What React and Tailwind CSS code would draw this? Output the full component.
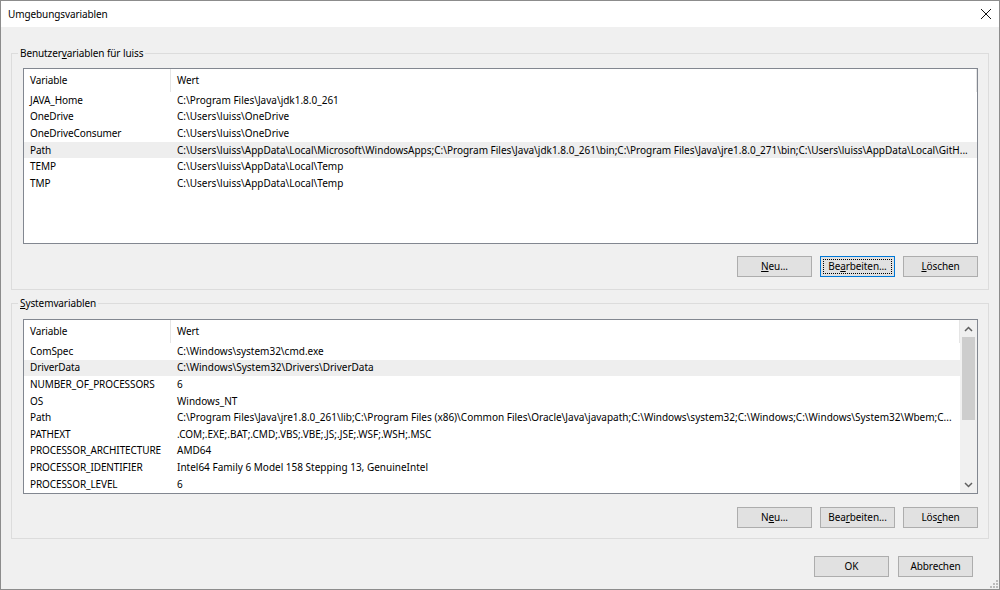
import React from "react";

const font = { fontFamily: '"Segoe UI", "Noto Sans", sans-serif' };

const userVars = [
  ["JAVA_Home", "C:\\Program Files\\Java\\jdk1.8.0_261"],
  ["OneDrive", "C:\\Users\\luiss\\OneDrive"],
  ["OneDriveConsumer", "C:\\Users\\luiss\\OneDrive"],
  [
    "Path",
    "C:\\Users\\luiss\\AppData\\Local\\Microsoft\\WindowsApps;C:\\Program Files\\Java\\jdk1.8.0_261\\bin;C:\\Program Files\\Java\\jre1.8.0_271\\bin;C:\\Users\\luiss\\AppData\\Local\\GitH...",
  ],
  ["TEMP", "C:\\Users\\luiss\\AppData\\Local\\Temp"],
  ["TMP", "C:\\Users\\luiss\\AppData\\Local\\Temp"],
];

const sysVars = [
  ["ComSpec", "C:\\Windows\\system32\\cmd.exe"],
  ["DriverData", "C:\\Windows\\System32\\Drivers\\DriverData"],
  ["NUMBER_OF_PROCESSORS", "6"],
  ["OS", "Windows_NT"],
  [
    "Path",
    "C:\\Program Files\\Java\\jre1.8.0_261\\lib;C:\\Program Files (x86)\\Common Files\\Oracle\\Java\\javapath;C:\\Windows\\system32;C:\\Windows;C:\\Windows\\System32\\Wbem;C...",
  ],
  ["PATHEXT", ".COM;.EXE;.BAT;.CMD;.VBS;.VBE;.JS;.JSE;.WSF;.WSH;.MSC"],
  ["PROCESSOR_ARCHITECTURE", "AMD64"],
  ["PROCESSOR_IDENTIFIER", "Intel64 Family 6 Model 158 Stepping 13, GenuineIntel"],
  ["PROCESSOR_LEVEL", "6"],
];

function Btn({ children, focused }) {
  return (
    <button
      className={
        "relative w-[75px] h-[21px] flex items-center justify-center text-black bg-[#e1e1e1] border " +
        (focused ? "border-[#0078d7]" : "border-[#adadad]")
      }
    >
      {focused && <span className="absolute inset-[2px] border border-dotted border-black" />}
      <span>{children}</span>
    </button>
  );
}

function Row({ name, value, selected }) {
  return (
    <div className={"flex h-[16.6px] items-center " + (selected ? "bg-[#eeeeee]" : "")}>
      <div className="w-[147px] shrink-0 pl-[6px] whitespace-nowrap overflow-hidden">{name}</div>
      <div className="flex-1 min-w-0 pl-[6px] pr-[4px] whitespace-nowrap overflow-hidden text-ellipsis tracking-normal">
        {value}
      </div>
    </div>
  );
}

function Header() {
  return (
    <div className="flex h-[23px] items-center">
      <div className="w-[147px] shrink-0 pl-[6px] h-full flex items-center border-r border-[#e5e5e5]">Variable</div>
      <div className="flex-1 pl-[6px] h-full flex items-center border-r border-[#e5e5e5]">Wert</div>
    </div>
  );
}

function Scrollbar() {
  return (
    <div className="w-[17px] shrink-0 bg-[#f0f0f0] flex flex-col">
      <div className="h-[17px] flex items-center justify-center">
        <svg width="9" height="6" viewBox="0 0 9 6">
          <path d="M1 5 L4.5 1.5 L8 5" stroke="#606060" strokeWidth="1.5" fill="none" />
        </svg>
      </div>
      <div className="h-[83px] mx-[2px] bg-[#cdcdcd]" />
      <div className="flex-1" />
      <div className="h-[17px] flex items-center justify-center">
        <svg width="9" height="6" viewBox="0 0 9 6">
          <path d="M1 1 L4.5 4.5 L8 1" stroke="#606060" strokeWidth="1.5" fill="none" />
        </svg>
      </div>
    </div>
  );
}

function Group({ label, children, className }) {
  return (
    <div className={"relative border border-[#dcdcdc] " + className}>
      <div className="absolute -top-[8px] left-[6px] px-[2px] bg-[#f0f0f0] leading-[14px]">{label}</div>
      {children}
    </div>
  );
}

export default function App() {
  return (
    <div
      className="w-[1000px] h-[590px] border border-[#8c8c8c] bg-[#f0f0f0] flex flex-col text-[10px] tracking-[-0.1px] text-black overflow-hidden"
      style={font}
    >
      {/* title bar */}
      <div className="h-[26px] bg-white flex items-center justify-between pl-[7px] pr-[8px] shrink-0">
        <span>Umgebungsvariablen</span>
        <svg width="10" height="10" viewBox="0 0 10 10">
          <path d="M0 0 L10 10 M10 0 L0 10" stroke="#111" strokeWidth="1" />
        </svg>
      </div>

      <div className="flex flex-col px-[10px] pt-[26px]">
        {/* Benutzervariablen */}
        <Group
          label={
            <>
              Benutzer<span className="underline">v</span>ariablen für luiss
            </>
          }
          className="h-[237px] pt-[14px] pl-[11px] pr-[10px] pb-[12px] flex flex-col"
        >
          <div className="h-[176px] border border-[#828790] bg-white flex flex-col">
            <Header />
            {userVars.map(([n, v]) => (
              <Row key={n} name={n} value={v} selected={n === "Path"} />
            ))}
          </div>
          <div className="mt-[12px] flex justify-end gap-[8px]">
            <Btn>
              <span className="underline">N</span>eu...
            </Btn>
            <Btn focused>
              Be<span className="underline">a</span>rbeiten...
            </Btn>
            <Btn>
              <span className="underline">L</span>öschen
            </Btn>
          </div>
        </Group>

        {/* Systemvariablen */}
        <Group
          label={
            <>
              <span className="underline">S</span>ystemvariablen
            </>
          }
          className="mt-[13px] h-[236px] pt-[15px] pl-[11px] pr-[10px] pb-[10px] flex flex-col"
        >
          <div className="h-[175px] border border-[#828790] bg-white flex">
            <div className="flex-1 min-w-0 flex flex-col">
              <Header />
              {sysVars.map(([n, v]) => (
                <Row key={n} name={n} value={v} selected={n === "DriverData"} />
              ))}
            </div>
            <Scrollbar />
          </div>
          <div className="mt-[13px] flex justify-end gap-[8px]">
            <Btn>
              N<span className="underline">e</span>u...
            </Btn>
            <Btn>
              Bea<span className="underline">r</span>beiten...
            </Btn>
            <Btn>
              Lös<span className="underline">c</span>hen
            </Btn>
          </div>
        </Group>

        {/* dialog buttons */}
        <div className="mt-[17px] flex justify-end gap-[9px] pr-[16px]">
          <Btn>OK</Btn>
          <Btn>Abbrechen</Btn>
        </div>
      </div>

      <div className="flex-1 flex justify-end items-end pr-[1px] pb-[1px]">
        <svg width="8" height="8" viewBox="0 0 8 8">
          <rect x="6" y="0" width="2" height="2" fill="#bbb" />
          <rect x="3" y="3" width="2" height="2" fill="#bbb" />
          <rect x="6" y="3" width="2" height="2" fill="#bbb" />
          <rect x="0" y="6" width="2" height="2" fill="#bbb" />
          <rect x="3" y="6" width="2" height="2" fill="#bbb" />
          <rect x="6" y="6" width="2" height="2" fill="#bbb" />
        </svg>
      </div>
    </div>
  );
}
